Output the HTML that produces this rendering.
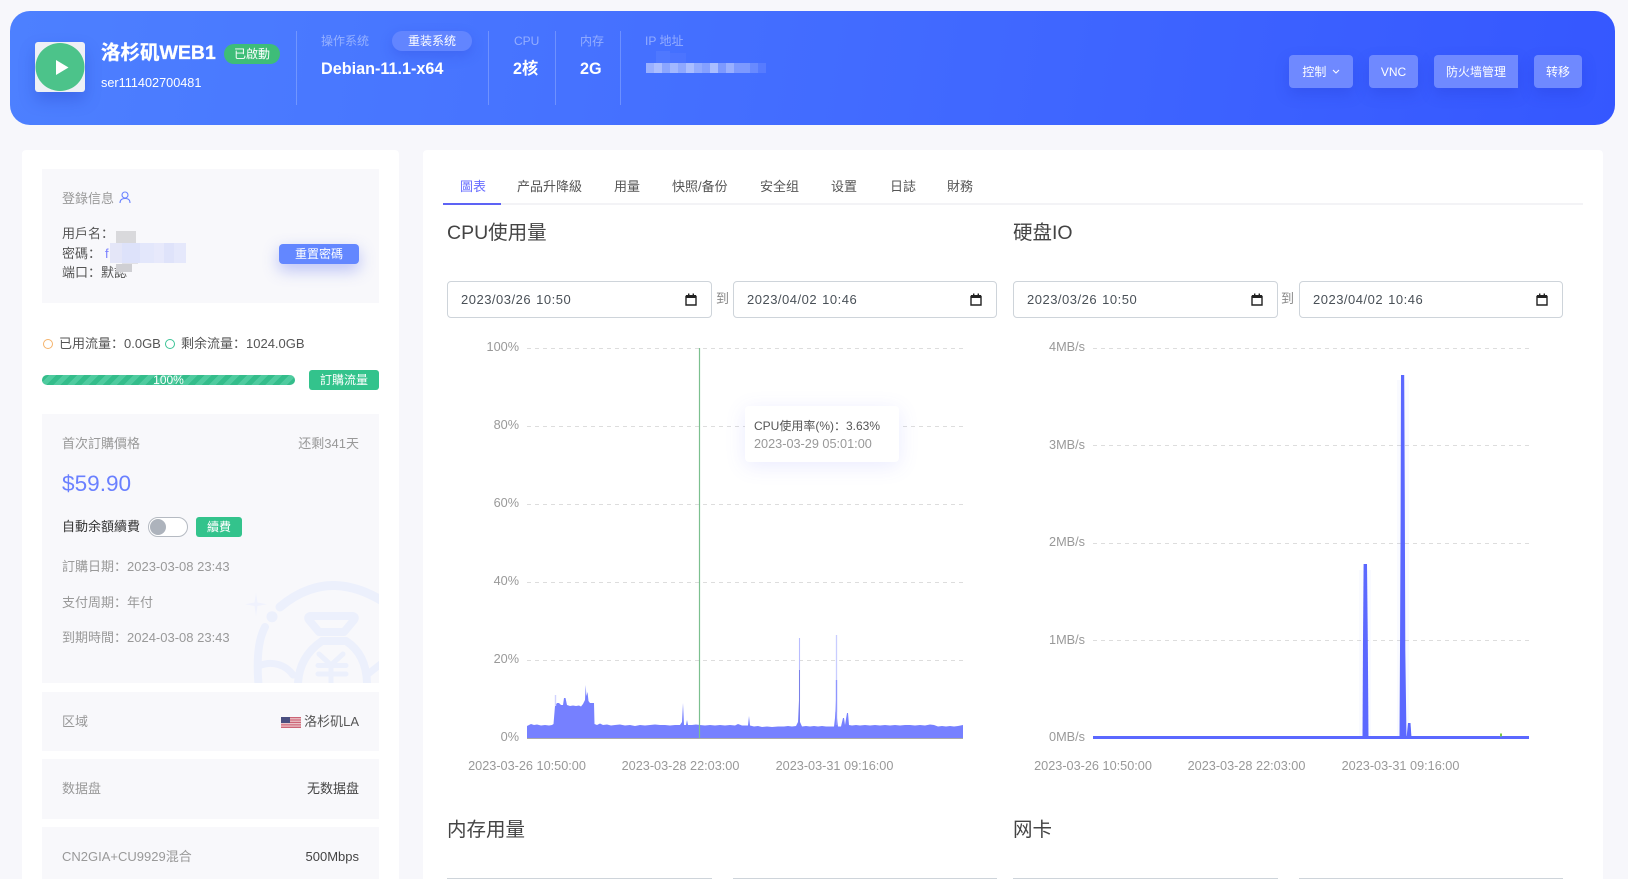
<!DOCTYPE html>
<html lang="zh">
<head>
<meta charset="utf-8">
<title>洛杉矶WEB1</title>
<style>
html,body{margin:0;padding:0;width:1628px;height:879px;overflow:hidden;background:#f7f7fb;}
body{position:relative;font-family:"Liberation Sans","Noto Sans CJK SC",sans-serif;font-size:13px;color:#555;}
.a{position:absolute;}
.t{position:absolute;white-space:nowrap;line-height:20px;height:20px;}
.r{text-align:right;}
.c{text-align:center;}
.box{position:absolute;left:42px;width:337px;background:#f8f8fb;}
.hdr{position:absolute;left:10px;top:11px;width:1605px;height:114px;border-radius:20px;background:linear-gradient(100deg,#4d80ff 0%,#4672ff 35%,#3f66ff 65%,#3557ff 100%);}
.div{position:absolute;top:31px;width:1px;height:74px;background:rgba(255,255,255,.22);}
.lbl{color:rgba(255,255,255,.42);font-size:12px;}
.val{color:#fff;font-size:16.2px;font-weight:700;}
.btn{position:absolute;top:55px;height:33px;line-height:35px;background:#6f89ff;border-radius:4px;color:#fff;font-size:12px;text-align:center;box-shadow:0 6px 14px rgba(30,50,200,.25);}
.inp{position:absolute;top:281px;height:35px;background:#fff;border:1px solid #ced4da;border-radius:4px;}
.inp span{position:absolute;left:13px;top:0;line-height:35px;font-size:13px;color:#495057;letter-spacing:.5px;word-spacing:1px;white-space:nowrap;}
.inp svg{position:absolute;top:11px;right:14px;}
.gb{font-size:13px;color:#999;}
.tab{position:absolute;top:177px;font-size:13px;color:#555;line-height:20px;white-space:nowrap;}
.ttl{position:absolute;font-size:19.5px;color:#444;line-height:28px;white-space:nowrap;}
.ax{position:absolute;font-size:12.7px;color:#999;line-height:18px;white-space:nowrap;}
</style>
</head>
<body>

<!-- header -->
<div class="hdr"></div>
<div class="a" style="left:35px;top:42px;width:50px;height:50px;background:#eef0f5;border-radius:3px;box-shadow:0 8px 16px rgba(30,50,180,.28);"></div>
<svg class="a" style="left:35px;top:42px;" width="50" height="50"><ellipse cx="25" cy="25" rx="24.5" ry="24" fill="#4cc38a"/><path d="M21 18 L33.5 25.5 L21 33 Z" fill="#fff"/></svg>
<div class="t" style="left:101px;top:43px;color:#fff;font-size:19.5px;font-weight:700;-webkit-text-stroke:.3px #fff;">洛杉矶WEB1</div>
<div class="a" style="left:224px;top:44px;width:56px;height:20px;border-radius:10px;background:#3ebd78;color:#fff;font-size:12px;line-height:20px;text-align:center;">已啟動</div>
<div class="t" style="left:101px;top:73px;color:#fff;font-size:12.7px;">ser111402700481</div>

<div class="div" style="left:296px"></div>
<div class="div" style="left:488px"></div>
<div class="div" style="left:555px"></div>
<div class="div" style="left:620px"></div>

<div class="t lbl" style="left:321px;top:31px;">操作系统</div>
<div class="a" style="left:392px;top:31px;width:80px;height:20px;border-radius:10px;background:#6285ff;color:#fff;font-size:12px;line-height:20px;text-align:center;box-shadow:0 5px 12px rgba(40,60,210,.25);">重装系统</div>
<div class="t val" style="left:321px;top:59px;">Debian-11.1-x64</div>

<div class="t lbl" style="left:514px;top:31px;">CPU</div>
<div class="t val" style="left:513px;top:59px;">2核</div>
<div class="t lbl" style="left:580px;top:31px;">内存</div>
<div class="t val" style="left:580px;top:59px;">2G</div>
<div class="t lbl" style="left:645px;top:31px;">IP 地址</div>

<svg class="a" style="left:640px;top:48px;" width="135" height="30">
<g fill="#fff">
<rect x="16" y="3" width="14" height="12" opacity=".06"/><rect x="30" y="5" width="16" height="10" opacity=".04"/>
<rect x="6" y="15" width="8" height="10" opacity=".45"/><rect x="14" y="15" width="8" height="10" opacity=".55"/><rect x="22" y="15" width="8" height="10" opacity=".38"/><rect x="30" y="15" width="8" height="10" opacity=".5"/><rect x="38" y="15" width="8" height="10" opacity=".4"/><rect x="46" y="15" width="8" height="10" opacity=".55"/><rect x="54" y="15" width="8" height="10" opacity=".42"/><rect x="62" y="15" width="8" height="10" opacity=".35"/><rect x="70" y="15" width="8" height="10" opacity=".55"/><rect x="78" y="15" width="8" height="10" opacity=".3"/><rect x="86" y="15" width="8" height="10" opacity=".45"/><rect x="94" y="15" width="8" height="10" opacity=".3"/><rect x="102" y="15" width="8" height="10" opacity=".3"/><rect x="110" y="15" width="8" height="10" opacity=".2"/><rect x="118" y="15" width="8" height="10" opacity=".1"/>
</g></svg>

<div class="btn" style="left:1289px;width:64px;">控制 <svg width="8" height="6" style="margin-left:2px;vertical-align:1px;"><path d="M1 1 L4 4 L7 1" fill="none" stroke="#fff" stroke-width="1.1"/></svg></div>
<div class="btn" style="left:1369px;width:49px;">VNC</div>
<div class="btn" style="left:1434px;width:84px;border-radius:4px 0 0 4px;">防火墙管理</div>
<div class="btn" style="left:1534px;width:48px;">转移</div>

<!-- left panel -->
<div class="a" style="left:22px;top:150px;width:377px;height:729px;background:#fff;border-radius:4px 4px 0 0;"></div>

<div class="box" style="top:169px;height:134px;"></div>
<div class="t gb" style="left:62px;top:189px;">登錄信息</div>
<svg class="a" style="left:119px;top:191px;" width="12" height="13"><circle cx="6" cy="4" r="3" fill="none" stroke="#6a82ff" stroke-width="1.1"/><path d="M1 12 C1 8.5 3 7.5 6 7.5 C9 7.5 11 8.5 11 12" fill="none" stroke="#6a82ff" stroke-width="1.1"/></svg>
<div class="t" style="left:62px;top:224px;">用戶名：</div>
<div class="t" style="left:62px;top:244px;">密碼：</div>
<div class="t" style="left:105px;top:244px;color:#7a80ff;">f</div>
<div class="t" style="left:62px;top:263px;">端口：默認</div>
<svg class="a" style="left:108px;top:228px;" width="80" height="46">
<g><rect x="8" y="3" width="20" height="16" fill="#d9d9dc"/><rect x="14" y="19" width="16" height="17" fill="#e0e0e6"/><rect x="8" y="36" width="16" height="8" fill="#cfcfd3"/>
<rect x="2" y="15" width="12" height="20" fill="#e4e6f8"/><rect x="14" y="15" width="18" height="20" fill="#dde2fa"/><rect x="32" y="15" width="14" height="20" fill="#e3e7fb"/><rect x="46" y="15" width="10" height="20" fill="#e7e9fb"/><rect x="56" y="15" width="10" height="20" fill="#dfe3fa"/><rect x="66" y="15" width="12" height="20" fill="#e5e8fb"/></g>
</svg>
<div class="a" style="left:279px;top:244px;width:80px;height:20px;background:#6387ff;border-radius:4px;color:#fff;font-size:12px;line-height:20px;text-align:center;box-shadow:0 6px 16px rgba(80,100,240,.38);">重置密碼</div>

<div class="a" style="left:43px;top:338.5px;width:8px;height:8px;border:1.5px solid #f5b36b;border-radius:50%;"></div>
<div class="t" style="left:59px;top:334px;">已用流量：0.0GB</div>
<div class="a" style="left:165px;top:338.5px;width:8px;height:8px;border:1.5px solid #3cc396;border-radius:50%;"></div>
<div class="t" style="left:181px;top:334px;">剩余流量：1024.0GB</div>

<div class="a" style="left:42px;top:375px;width:253px;height:10px;border-radius:5px;background:#35c08e repeating-linear-gradient(135deg,#34bd8b 0,#34bd8b 5px,#4fcb9f 5px,#4fcb9f 10px);"></div>
<div class="t c" style="left:42px;top:370px;width:253px;color:#fff;font-size:12px;">100%</div>
<div class="a" style="left:309px;top:370px;width:70px;height:20px;background:#33c38c;border-radius:3px;color:#fff;font-size:12px;line-height:20px;text-align:center;">訂購流量</div>

<div class="box" style="top:414px;height:269px;overflow:hidden;"></div>
<svg class="a" style="left:42px;top:414px;" width="337" height="269" viewBox="42 414 337 269">
<g fill="none" stroke="#ecf0fc" stroke-linecap="round" stroke-linejoin="round">
<path d="M280 607 C300 590 320 585 335 585.5 C352 586 368 592 384 602" stroke-width="9"/>
<path d="M265 627 C258 640 256 660 259 690" stroke-width="8"/>
<path d="M259 666 C272 660 286 665 293 675" stroke-width="7"/>
<path d="M310 616 H353 Q356 617 354 620 L344 632 H319 L309 620 Q307 617 310 616 Z" stroke-width="8"/>
<path d="M322 641 H346 C360 650 368 666 367 690 M322 641 C306 652 297 668 298 690" stroke-width="8"/>
<path d="M368 674 L382 663" stroke-width="7"/>
<path d="M319 654 L331 665 L343 654 M331 665 V690 M318 665.5 H346 M318 674 H346" stroke-width="5"/>
</g>
<path d="M256 593 L257.5 602.5 L267 604.3 L257.5 606 L256 616 L254.5 606 L245 604.3 L254.5 602.5 Z" fill="#f0f2fd"/>
<circle cx="272" cy="616.7" r="5.5" fill="#ecf0fc"/>
</svg>
<div class="t gb" style="left:62px;top:434px;">首次訂購價格</div>
<div class="t gb r" style="right:1269px;top:434px;">还剩341天</div>
<div class="t" style="left:62px;top:474px;color:#6a80ff;font-size:22.6px;">$59.90</div>
<div class="t" style="left:62px;top:517px;color:#333;">自動余額續費</div>
<div class="a" style="left:148px;top:517px;width:38px;height:18px;background:#fff;border:1px solid #b5bac2;border-radius:10px;"></div>
<div class="a" style="left:150px;top:519px;width:16px;height:16px;background:#adb3bc;border-radius:50%;"></div>
<div class="a" style="left:196px;top:517px;width:46px;height:20px;background:#33c38c;border-radius:3px;color:#fff;font-size:12px;line-height:20px;text-align:center;">續費</div>
<div class="t gb" style="left:62px;top:557px;">訂購日期：2023-03-08 23:43</div>
<div class="t gb" style="left:62px;top:593px;">支付周期：年付</div>
<div class="t gb" style="left:62px;top:628px;">到期時間：2024-03-08 23:43</div>

<div class="box" style="top:692px;height:59px;"></div>
<div class="t gb" style="left:62px;top:712px;">区域</div>
<svg class="a" style="left:281px;top:717px;" width="20" height="11"><rect width="20" height="11" fill="#f3dfe0"/><g fill="#c8566a"><rect y="0" width="20" height=".9"/><rect y="1.7" width="20" height=".9"/><rect y="3.4" width="20" height=".9"/><rect y="5.1" width="20" height=".9"/><rect y="6.8" width="20" height=".9"/><rect y="8.5" width="20" height=".9"/><rect y="10.1" width="20" height=".9"/></g><rect width="9" height="6" fill="#4a4f80"/></svg>
<div class="t r" style="right:1269px;top:712px;">洛杉矶LA</div>

<div class="box" style="top:759px;height:60px;"></div>
<div class="t gb" style="left:62px;top:779px;">数据盘</div>
<div class="t r" style="right:1269px;top:779px;color:#444;">无数据盘</div>

<div class="box" style="top:827px;height:52px;"></div>
<div class="t gb" style="left:62px;top:847px;">CN2GIA+CU9929混合</div>
<div class="t r" style="right:1269px;top:847px;color:#444;">500Mbps</div>

<!-- right panel -->
<div class="a" style="left:423px;top:150px;width:1180px;height:729px;background:#fff;border-radius:4px 4px 0 0;"></div>
<div class="a" style="left:443px;top:203px;width:1140px;height:2px;background:#f3f3f6;"></div>
<div class="a" style="left:443px;top:203px;width:58px;height:2px;background:#5d63f5;"></div>
<div class="tab" style="left:460px;color:#6a6fff;">圖表</div>
<div class="tab" style="left:517px;">产品升降級</div>
<div class="tab" style="left:614px;">用量</div>
<div class="tab" style="left:672px;">快照/备份</div>
<div class="tab" style="left:760px;">安全组</div>
<div class="tab" style="left:831px;">设置</div>
<div class="tab" style="left:890px;">日誌</div>
<div class="tab" style="left:947px;">財務</div>

<div class="ttl" style="left:447px;top:219px;">CPU使用量</div>
<div class="ttl" style="left:1013px;top:219px;">硬盘IO</div>

<div class="inp" style="left:447px;width:263px;"><span>2023/03/26 10:50</span><svg width="12" height="13"><path d="M1 3.5 H11 V12 H1 Z" fill="none" stroke="#222" stroke-width="1.4"/><rect x="1" y="2" width="10" height="3" fill="#222"/><rect x="3" y="0.5" width="1.4" height="2" fill="#222"/><rect x="7.6" y="0.5" width="1.4" height="2" fill="#222"/></svg></div>
<div class="t" style="left:716px;top:289px;color:#888;">到</div>
<div class="inp" style="left:733px;width:262px;"><span>2023/04/02 10:46</span><svg width="12" height="13"><path d="M1 3.5 H11 V12 H1 Z" fill="none" stroke="#222" stroke-width="1.4"/><rect x="1" y="2" width="10" height="3" fill="#222"/><rect x="3" y="0.5" width="1.4" height="2" fill="#222"/><rect x="7.6" y="0.5" width="1.4" height="2" fill="#222"/></svg></div>
<div class="inp" style="left:1013px;width:263px;"><span>2023/03/26 10:50</span><svg width="12" height="13"><path d="M1 3.5 H11 V12 H1 Z" fill="none" stroke="#222" stroke-width="1.4"/><rect x="1" y="2" width="10" height="3" fill="#222"/><rect x="3" y="0.5" width="1.4" height="2" fill="#222"/><rect x="7.6" y="0.5" width="1.4" height="2" fill="#222"/></svg></div>
<div class="t" style="left:1281px;top:289px;color:#888;">到</div>
<div class="inp" style="left:1299px;width:262px;"><span>2023/04/02 10:46</span><svg width="12" height="13"><path d="M1 3.5 H11 V12 H1 Z" fill="none" stroke="#222" stroke-width="1.4"/><rect x="1" y="2" width="10" height="3" fill="#222"/><rect x="3" y="0.5" width="1.4" height="2" fill="#222"/><rect x="7.6" y="0.5" width="1.4" height="2" fill="#222"/></svg></div>

<!-- charts -->
<svg class="a" style="left:0;top:0;" width="1628" height="879">
<g stroke="#ddd" stroke-width="1" stroke-dasharray="4 4" fill="none">
<path d="M527 348.5 H963 M527 426.5 H963 M527 504.5 H963 M527 582.5 H963 M527 660.5 H963"/>
<path d="M1093 348.5 H1529 M1093 445.5 H1529 M1093 543.5 H1529 M1093 640.5 H1529"/>
</g>
<path d="M527 738 V726 L529 725 L531 724 L534 725 L537 724.5 L541 725.5 L545 725 L549 725.5 L552 725 L553.5 724 L555 706 L557 703 L559 703 L561 705 L563 705 L564 698 L565.5 698 L567 705 L570 706 L573 705.5 L576 706 L579 705.5 L581 706.5 L583 704 L585 700 L585.7 685 L586.4 696 L587.5 692 L588.5 701 L590 703 L594 703 L594.5 724 L597 725 L600 723.5 L603 725 L607 724.5 L611 725.5 L615 725 L620 724.5 L625 725.5 L630 725 L635 726 L640 725 L645 725.5 L650 725 L655 724.5 L660 725 L665 725 L670 725.5 L675 725 L680 725 L682 722 L683 703 L684 725 L686 725 L687 720 L688 725 L692 725 L696 724.5 L700 725 L705 725.5 L710 725 L715 725.5 L720 725 L725 725.5 L730 725 L735 725.5 L738 724 L742 725.5 L746 725.5 L748 725.5 L749 716 L750 725.5 L754 726.5 L758 726 L762 727 L767 726.5 L772 727 L778 726.5 L784 726.5 L788 726 L792 726.5 L796 726 L798 722 L799 700 L800 722 L802 726.5 L806 726 L810 726.5 L814 726 L818 726.5 L822 726 L826 726.5 L830 726.5 L834 726.5 L835 718 L836 700 L837 718 L838 726.5 L841 726.5 L843 718 L844 718 L845 725 L847 713 L848 713 L849 725 L852 725.5 L856 725 L860 725.5 L865 725 L870 725.5 L875 725 L880 725.5 L885 725 L890 725.5 L895 725 L900 725.5 L905 725 L910 725 L915 725.5 L920 725 L925 725.5 L930 724.5 L934 725 L938 726.5 L942 726 L946 726.5 L950 726 L954 726.5 L958 726 L963 725 V738 Z" fill="#7680ff"/>
<path d="M555.5 695 V706" stroke="#d0d3ff" stroke-width="1.4" fill="none"/>
<path d="M799.5 638 V700" stroke="#b9bdff" stroke-width="1.1" fill="none"/>
<path d="M799.5 670 V725" stroke="#7a80e8" stroke-width="1" fill="none"/>
<path d="M836.5 635 V712" stroke="#c9cdff" stroke-width="1.3" fill="none"/>
<path d="M836.5 680 V725" stroke="#8f96ff" stroke-width="1.3" fill="none"/>
<path d="M699.5 348 V738" stroke="#7cc08f" stroke-width="1.2" fill="none"/>
<path d="M527 738.5 H963" stroke="#aaa" stroke-width="1"/>
<path d="M1359 737 V570 H1371 V737 Z M1397 737 V380 H1409 V737 Z" fill="#5b68ff" opacity=".035"/>
<path d="M1093 737.5 H1529" fill="none" stroke="#5b68ff" stroke-width="3"/>
<path d="M1362.5 738 L1363 640 L1363.6 564 H1367 L1367.8 640 L1368.5 738 Z" fill="#5b68ff"/>
<path d="M1399.5 738 L1400 650 L1400.6 520 L1401 375 H1404.2 L1404.8 500 L1405.3 650 L1406.5 738 Z" fill="#5b68ff"/>
<path d="M1406.5 738 L1408 723 H1410.5 L1411.5 738 Z" fill="#5b68ff"/>
<rect x="1500" y="733.5" width="2" height="3" fill="#7ac943"/>
</svg>

<div class="ax r" style="right:1109px;top:338px;">100%</div>
<div class="ax r" style="right:1109px;top:416px;">80%</div>
<div class="ax r" style="right:1109px;top:494px;">60%</div>
<div class="ax r" style="right:1109px;top:572px;">40%</div>
<div class="ax r" style="right:1109px;top:650px;">20%</div>
<div class="ax r" style="right:1109px;top:728px;">0%</div>
<div class="ax c" style="left:447px;width:160px;top:757px;">2023-03-26 10:50:00</div>
<div class="ax c" style="left:600.5px;width:160px;top:757px;">2023-03-28 22:03:00</div>
<div class="ax c" style="left:754.5px;width:160px;top:757px;">2023-03-31 09:16:00</div>

<div class="ax r" style="right:543px;top:338px;">4MB/s</div>
<div class="ax r" style="right:543px;top:436px;">3MB/s</div>
<div class="ax r" style="right:543px;top:533px;">2MB/s</div>
<div class="ax r" style="right:543px;top:631px;">1MB/s</div>
<div class="ax r" style="right:543px;top:728px;">0MB/s</div>
<div class="ax c" style="left:1013px;width:160px;top:757px;">2023-03-26 10:50:00</div>
<div class="ax c" style="left:1166.5px;width:160px;top:757px;">2023-03-28 22:03:00</div>
<div class="ax c" style="left:1320.5px;width:160px;top:757px;">2023-03-31 09:16:00</div>

<!-- tooltip -->
<div class="a" style="left:745px;top:406px;width:154px;height:56px;background:#fff;border-radius:4px;box-shadow:0 4px 20px rgba(90,100,255,.13);"></div>
<div class="t" style="left:754px;top:416px;font-size:12px;color:#555;">CPU使用率(%)：3.63%</div>
<div class="t" style="left:754px;top:433.5px;font-size:12.7px;color:#999;">2023-03-29 05:01:00</div>

<div class="ttl" style="left:447px;top:816px;">内存用量</div>
<div class="ttl" style="left:1013px;top:816px;">网卡</div>
<div class="a" style="left:447px;top:878px;width:265px;height:1px;background:#ced4da;"></div>
<div class="a" style="left:733px;top:878px;width:264px;height:1px;background:#ced4da;"></div>
<div class="a" style="left:1013px;top:878px;width:265px;height:1px;background:#ced4da;"></div>
<div class="a" style="left:1299px;top:878px;width:264px;height:1px;background:#ced4da;"></div>

</body>
</html>
